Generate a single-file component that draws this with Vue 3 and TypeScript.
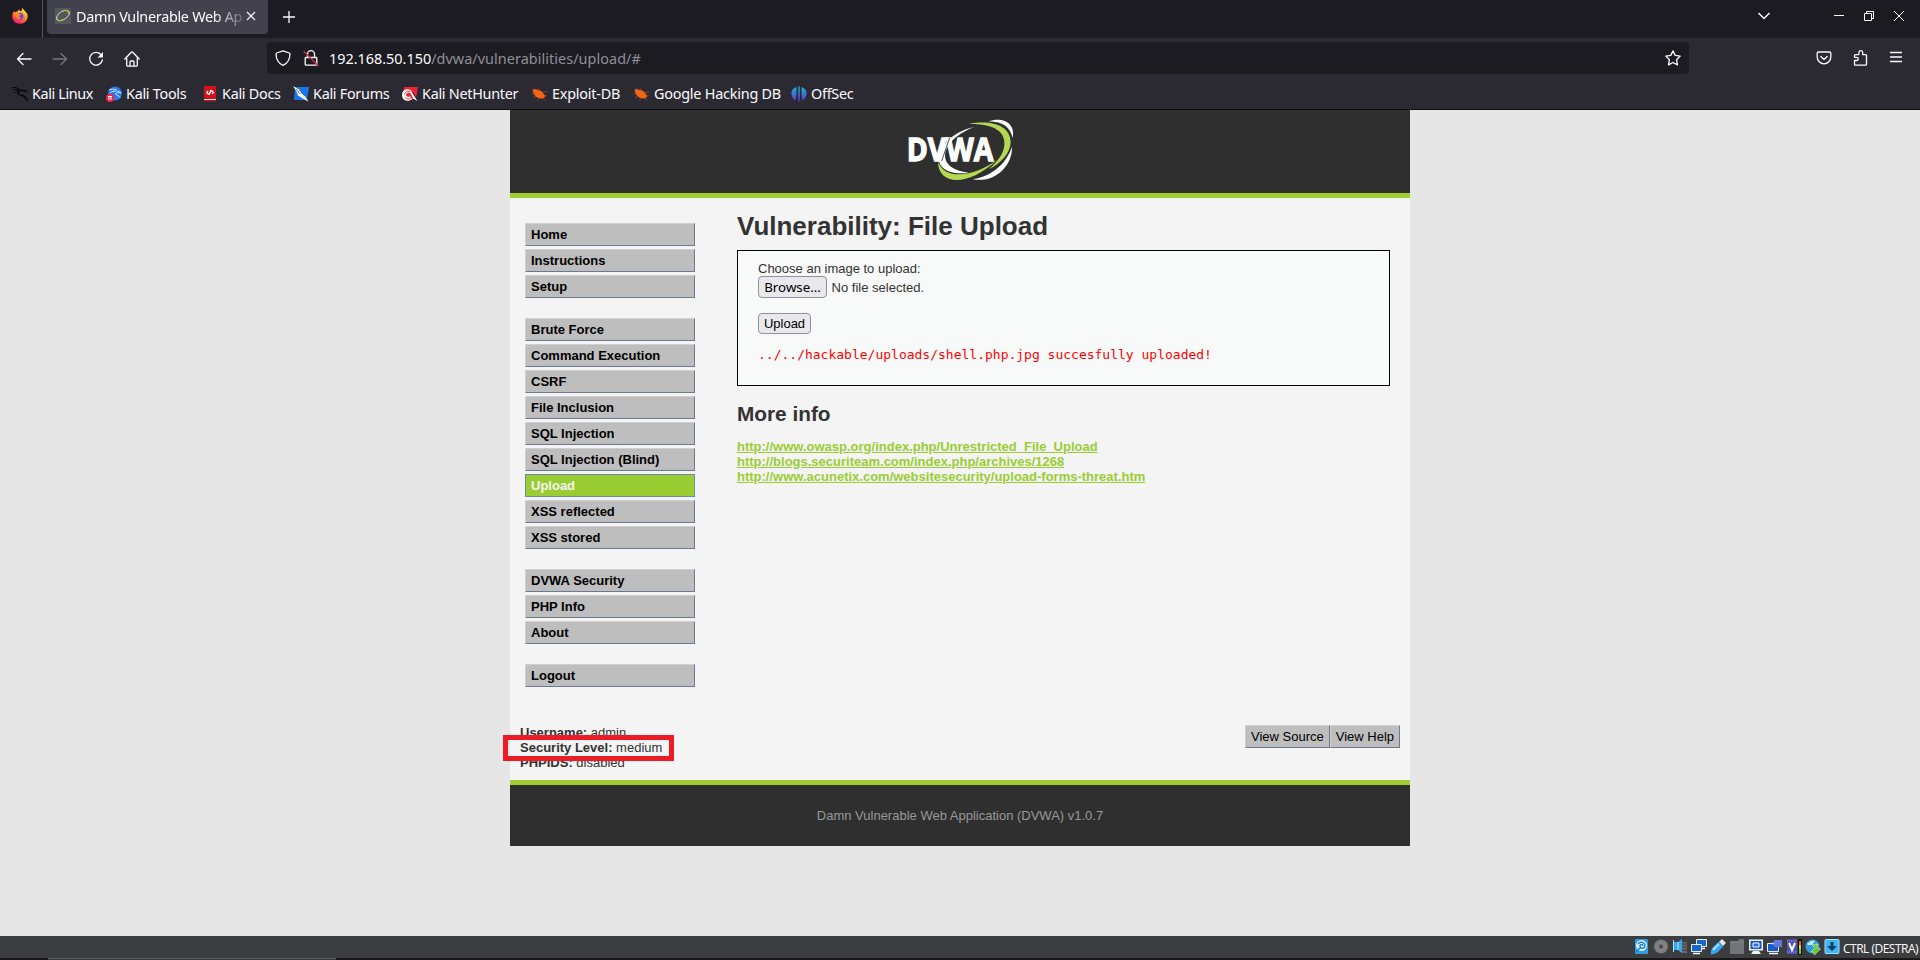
<script setup lang="ts">
interface MenuItem {
  label: string
  active?: boolean
}

const menu: MenuItem[][] = [
  [{ label: 'Home' }, { label: 'Instructions' }, { label: 'Setup' }],
  [
    { label: 'Brute Force' },
    { label: 'Command Execution' },
    { label: 'CSRF' },
    { label: 'File Inclusion' },
    { label: 'SQL Injection' },
    { label: 'SQL Injection (Blind)' },
    { label: 'Upload', active: true },
    { label: 'XSS reflected' },
    { label: 'XSS stored' },
  ],
  [{ label: 'DVWA Security' }, { label: 'PHP Info' }, { label: 'About' }],
  [{ label: 'Logout' }],
]

const links: string[] = [
  'http://www.owasp.org/index.php/Unrestricted_File_Upload',
  'http://blogs.securiteam.com/index.php/archives/1268',
  'http://www.acunetix.com/websitesecurity/upload-forms-threat.htm',
]

const info: { key: string; value: string }[] = [
  { key: 'Username:', value: 'admin' },
  { key: 'Security Level:', value: 'medium' },
  { key: 'PHPIDS:', value: 'disabled' },
]

const bookmarks: { label: string; icon: string }[] = [
  { label: 'Kali Linux', icon: 'kali' },
  { label: 'Kali Tools', icon: 'tools' },
  { label: 'Kali Docs', icon: 'docs' },
  { label: 'Kali Forums', icon: 'forums' },
  { label: 'Kali NetHunter', icon: 'hunter' },
  { label: 'Exploit-DB', icon: 'bug' },
  { label: 'Google Hacking DB', icon: 'bug' },
  { label: 'OffSec', icon: 'offsec' },
]
</script>

<template>
  <div class="screen">
    <header class="chrome">
      <div class="tabbar">
        <div class="pinned">
          <svg class="i16" viewBox="0 0 16 16">
            <defs>
              <linearGradient id="fox" x1="0.8" y1="0" x2="0.3" y2="1">
                <stop offset="0" stop-color="#fff04a" />
                <stop offset="0.45" stop-color="#ff9a1f" />
                <stop offset="0.8" stop-color="#ff3b4f" />
                <stop offset="1" stop-color="#e31587" />
              </linearGradient>
            </defs>
            <path d="M2 3.2 3 4.4C3.8 3.6 4.6 3.4 5.4 3.6 6 2.4 6.6 1.8 7.4 1.6 7.2 2.6 7.6 3 8.4 3.2L9.6 2.8C9.8 1.8 10 .9 10.8 0c.4 1.8 1.6 2.4 2.8 3.8C15 5 15.8 6.600 15.700 8.400 15.500 12.800 12.200 15.800 8 15.800 3.600 15.800.3 12.700.3 8.200.3 6.200 1 4.600 2 3.200Z" fill="url(#fox)" />
            <circle cx="8" cy="8.300" r="3.500" fill="#7542e5" />
            <path d="M3.500 5.200c1.500-.7 2.800-.3 3.800.7l2 .4c-.4 1-1.400 1-2.100 1.500-.3 1.500.9 2.300 2.300 1.700-.6 1.500-2.700 1.900-4.200.9C3.600 9.200 3 7 3.500 5.200Z" fill="#ff8b24" />
          </svg>
        </div>
        <div class="tab">
          <svg class="i16" viewBox="0 0 16 16">
            <rect width="16" height="16" fill="#55575d" />
            <path d="M8 3C13 1 16 4 13.500 7.500 11 11 6 13.500 3 12.500 0 11.500 2 5 8 3Z" fill="none" stroke="#dfe5d6" stroke-width="1" />
            <path d="M8 3c4-1.600 6.500.3 5.600 2.800M9 11.300C5 13.500 2 13 2 10.500" fill="none" stroke="#a3c63c" stroke-width="1.200" />
          </svg>
          <span class="tab-title">Damn Vulnerable Web Ap</span>
          <svg class="tab-x" viewBox="0 0 10 10"><path d="m1 1 8 8M9 1 1 9" /></svg>
        </div>
        <svg class="plus" viewBox="0 0 12 12"><path d="M6 0v12M0 6h12" /></svg>
        <div class="window-tools">
          <svg class="chev" viewBox="0 0 12 8"><path d="m.5 1 5.500 5.500L11.500 1" /></svg>
          <svg class="w10" viewBox="0 0 10 10"><path d="M0 4.500h10" /></svg>
          <svg class="w10" viewBox="0 0 10 10"><path d="M.5 2.500h7v7h-7zM2.500 2.500v-2h7v7h-2" /></svg>
          <svg class="w10" viewBox="0 0 10 10"><path d="m0 0 10 10M10 0 0 10" /></svg>
        </div>
      </div>

      <div class="navbar">
        <svg class="i16 stroke" viewBox="0 0 16 16"><path d="M15 8H1.500M7 2.500 1.500 8 7 13.500" /></svg>
        <svg class="i16 stroke dim" viewBox="0 0 16 16"><path d="M1 8h13.500M9 2.500 14.500 8 9 13.500" /></svg>
        <svg class="i16 stroke" viewBox="0 0 16 16">
          <path d="M13.300 4A6.400 6.400 0 1 0 14.400 8.800" />
          <path d="M15 1v5.500H9.500Z" fill="#fbfbfe" stroke="none" />
        </svg>
        <svg class="i16 stroke" viewBox="0 0 16 16">
          <path d="M.8 8 7.300 1.300q.7-.6 1.400 0L15.200 8M2.700 7v7q0 1.200 1.200 1.200h8.200q1.200 0 1.200-1.200V7M6 15v-4q0-1 1-1h2q1 0 1 1v4" />
        </svg>
        <div class="urlbar">
          <svg class="i16 stroke" viewBox="0 0 16 16">
            <path d="M8 .8 14.300 3q.7.300.7 1C14.800 9.500 12.500 13.500 8 15.300 3.500 13.500 1.200 9.500 1 4q0-.7.7-1Z" />
          </svg>
          <svg class="i16 stroke lock" viewBox="0 0 16 16">
            <path d="M3 7.500h10q.8 0 .8.800v5.900q0 1-1 1H3.200q-1 0-1-1V8.300q0-.8.800-.8ZM4.500 7.500V4.200a3.500 3.500 0 0 1 7 0v3.300" />
            <path class="slash" d="m1 1.500 14 14" />
          </svg>
          <span class="url"><b>192.168.50.150</b>/dvwa/vulnerabilities/upload/#</span>
          <svg class="i16 stroke star" viewBox="0 0 16 16">
            <path d="M8 .9 10.200 5.400 15.200 6.100 11.600 9.700 12.500 14.900 8 12.500 3.500 14.900 4.400 9.700.8 6.100 5.800 5.400Z" />
          </svg>
        </div>
        <div class="nav-right">
          <svg class="i16 stroke" viewBox="0 0 16 16">
            <path d="M2.300 2h11.400q1.100 0 1.100 1.100V7a6.800 6.800 0 0 1-13.600 0V3.100Q1.200 2 2.300 2Z" />
            <path d="m4.800 6.500 3.200 3 3.200-3" />
          </svg>
          <svg class="i16 stroke" viewBox="0 0 16 16">
            <path d="M2.500 10.500V14.500q0 .7.7.7H13.500q1 0 1-1V5.600q0-1-1-1H10.700V2.500a1.900 1.900 0 0 0-3.800 0V4.600H3.500q-1 0-1 1V7.300H4.600a1.600 1.600 0 0 1 0 3.200H2.500" />
          </svg>
          <svg class="i16 stroke" viewBox="0 0 16 16"><path d="M2.500 2.500h11M2.500 7h11M2.500 11.500h11" /></svg>
        </div>
      </div>

      <nav class="bookmarks">
        <a v-for="b in bookmarks" :key="b.label" class="bookmark" :class="'mark-' + b.icon">
          <svg v-if="b.icon === 'kali'" class="i16" viewBox="0 0 16 16" fill="none" stroke="#08080a">
            <path d="M0 1.500c4-.3 7.500.8 9 3M1 4c3.500-1.200 6-.5 8 1M2 7c2-1.500 4-2 6.500-1.500" stroke-width="1" />
            <path d="M7 4c-2 2.500-1 5 2.500 5.200C12.500 9.500 13.500 11 15.500 15M9 4.500c2.500-.5 4.500.5 6 1.500" stroke-width="1.500" />
          </svg>
          <svg v-else-if="b.icon === 'tools'" class="i16" viewBox="0 0 16 16">
            <circle cx="9" cy="7.500" r="7" fill="#2877f4" />
            <path d="M3 4c5-2 8 0 9 1.500 1.500 0 2.500.6 3 1.500-2-.7-5-.6-5.500.8 0 1.700 3.500 1.200 4.800 4M4 7c2-2 4-2 6-1.500" fill="none" stroke="#d4e6ff" />
            <circle cx="4" cy="12" r="4" fill="#f3243a" />
            <path d="M2 10.500h4M3 10.500v3.500M5 10.500v3.500" stroke="#fff" />
          </svg>
          <svg v-else-if="b.icon === 'docs'" class="i16" viewBox="0 0 16 16">
            <path d="M2 0h12v13H2z" fill="#d3101c" />
            <path d="M2 13h12v1.200H2z" fill="#f6e7e5" />
            <path d="M1.500 14.200h12V15.500h-12z" fill="#b90d17" />
            <path d="M6 5 4.700 6.500 6 7.900H8M8 5h2l1.400 1.400L10 7.800M9 3.800 7 9" fill="none" stroke="#fff" stroke-width="1.300" />
          </svg>
          <svg v-else-if="b.icon === 'forums'" class="i16" viewBox="0 0 16 16">
            <path d="M2 1h14l-2 13H1Z" fill="#1976e8" />
            <path d="m0 0 6 3.500 2.500 4 4 3.500 3 4.500-5-2.500L5 9.500 3.500 5.500Z" fill="#fff" />
            <path d="m3 3 4 5" stroke="#253a58" stroke-width=".7" />
          </svg>
          <svg v-else-if="b.icon === 'hunter'" class="i16" viewBox="0 0 16 16">
            <path d="M2 1h14l-2 11-6 2.500L1 13Z" fill="#eb2334" />
            <path d="M0 9C0 3 7 1.500 10 5.500c1 3 2.500 4.500 5.500 9.500l-4.500-2.500L9.500 9C8.500 6 5.500 5.500 4.200 8c-.7 2.700 2.300 3.500 3.800 2.200L10 13c-4 3.500-10 1.500-10-4Z" fill="#fff" />
            <path d="M2.500 8.500C3 5 7 4 9 6.500M3 11.500c1.500 2 4.500 2 6 .5" fill="none" stroke="#eb2334" stroke-width=".9" />
            <path d="m10 5.500 5.500 8.500" stroke="#20212a" stroke-width=".9" />
          </svg>
          <svg v-else-if="b.icon === 'bug'" class="i16" viewBox="0 0 16 16">
            <path d="M1.500 4C3 2.500 5 3 6.500 4 9.500 4 12 6 13 8.500l1.500 1.700-2.500 2.300C8 13 4 11 2.500 7.500Z" fill="#f06518" />
            <path d="M4 4 2.500 1.500M8 4.500 7 2M12 6.500l4-1M3 7.500.5 8M5 10.500l-3 1M8 12.500l-1.500 2M13.500 9l2.500 1M12 12.500l2 2" stroke="#9a4920" stroke-width=".8" />
          </svg>
          <svg v-else class="i16" viewBox="0 0 16 16">
            <defs>
              <linearGradient id="off" x2="0" y2="1">
                <stop offset="0" stop-color="#19b1c7" />
                <stop offset="0.5" stop-color="#3978d5" />
                <stop offset="1" stop-color="#6328cf" />
              </linearGradient>
            </defs>
            <path d="M5.500 1C-1 3-1 10 4 14.500 5.500 12 5.500 9 5.500 1ZM10.500 1c6.500 2 6.500 9 1.500 13.500-1.500-2.500-1.500-5.500-1.500-13.500ZM7.200.5h1.600v15H7.200Z" fill="url(#off)" />
          </svg>
          <span>{{ b.label }}</span>
        </a>
      </nav>
    </header>

    <main class="viewport">
      <div class="site">
        <div class="site-header">
          <svg class="logo" viewBox="81 42 324 186">
            <path d="M325 49C370 34 408 56 398 99 390 68 372 50 325 49Z" fill="#fff" />
            <path d="M266 57C335 43 392 62 392 112 391 145 362 176 326 193 360 163 375 139 373 110 370 70 325 56 266 57Z" fill="#b5d854" />
            <path d="M174 170C174 238 260 250 352 164 293 209 197 232 174 170Z" fill="#b5d854" />
            <path d="M286 65C200 82 157 150 186 186 203 204 235 208 266 203 220 198 194 178 195 150 198 115 236 82 286 65Z" fill="#fff" />
            <path d="M396 125C398 185 340 237 277 222 330 217 378 179 396 125Z" fill="#fff" />
            <text x="80" y="169" textLength="260" lengthAdjust="spacingAndGlyphs" class="logo-text">DVWA</text>
            <path d="M209 98 185 168" stroke="#2f2f2f" stroke-width="2.500" />
          </svg>
        </div>

        <div class="site-body">
          <aside class="menu">
            <ul v-for="(group, gi) in menu" :key="gi">
              <li v-for="m in group" :key="m.label" :class="{ active: m.active }">{{ m.label }}</li>
            </ul>
          </aside>
          <section class="content">
            <h1>Vulnerability: File Upload</h1>
            <div class="upload-box">
              <div class="line">Choose an image to upload:</div>
              <div class="file-row"><span class="btn browse">Browse…</span><span>No file selected.</span></div>
              <span class="btn submit">Upload</span>
              <pre>../../hackable/uploads/shell.php.jpg succesfully uploaded!</pre>
            </div>
            <h2>More info</h2>
            <ul class="links">
              <li v-for="l in links" :key="l"><a>{{ l }}</a></li>
            </ul>
          </section>
        </div>

        <div class="system-info">
          <div class="info">
            <div v-for="i in info" :key="i.key"><b>{{ i.key }}</b> {{ i.value }}</div>
            <div class="highlight"></div>
          </div>
          <div class="view-buttons"><span>View Source</span><span>View Help</span></div>
        </div>

        <footer class="site-footer">Damn Vulnerable Web Application (DVWA) v1.0.7</footer>
      </div>
    </main>

    <div class="vm-bar">
      <svg class="i16" viewBox="0 0 16 16">
        <rect x="1" width="13" height="15" rx="1" fill="#2e9be2" />
        <circle cx="7.500" cy="6.500" r="5.500" fill="#d9f0fc" />
        <path d="M4 5c2-3 7-2 7 1.500S6.500 10 6 7.500 9 5 9 7M2 13l4-4" fill="none" stroke="#1f7fc7" stroke-width="1.400" />
      </svg>
      <svg class="i16" viewBox="0 0 16 16">
        <circle cx="8" cy="7.500" r="7" fill="#7b7c7d" /><circle cx="8" cy="7.500" r="2" fill="#47494b" /><circle cx="8" cy="7.500" r="4" fill="none" stroke="#888" />
      </svg>
      <svg class="i16" viewBox="0 0 16 16">
        <path d="M9 3h6v11H9z" fill="#66686a" /><path d="M10 5h6M10 8h6M10 11h6" stroke="#3e4042" />
        <path d="M2 3h4l4-3v14l-4-3H2z" fill="#3ea4f0" /><path d="M6 3v8M1.500 1v12" stroke="#a9e1ff" />
      </svg>
      <svg class="i16" viewBox="0 0 16 16">
        <path d="M5.500.5h10v7h-10z" fill="#1766ce" stroke="#e7edf4" /><path d="M8 9.500h6" stroke="#fff" stroke-width="1.500" />
        <path d="M.5 5.500h10v7H.5z" fill="#1766ce" stroke="#e7edf4" /><path d="M2 14.500h7" stroke="#fff" stroke-width="1.500" />
      </svg>
      <svg class="i16" viewBox="0 0 16 16">
        <path d="m9 3 3-3 4 4-3 3Z" fill="#e8e8e8" /><path d="M9 2.500 13.500 7 8 13q-3 2-7 2.500Q0 12 3 8Z" fill="#39a5ee" /><path d="m3 11 6-6" stroke="#a8e2ff" stroke-width="2" />
      </svg>
      <svg class="i16" viewBox="0 0 16 16"><path d="M1 2h8l1-2h5v15H1z" fill="#737475" /><path d="M1 3h14" stroke="#858687" /></svg>
      <svg class="i16" viewBox="0 0 16 16">
        <path d="M1 .500h14v11H1zM5 12h6l2 3H3z" fill="#eff2f7" /><path d="M2.500 2h11v8h-11z" fill="#1857bd" /><path d="M5 4h6v4H5z" fill="#2173df" stroke="#fff" />
      </svg>
      <svg class="i16" viewBox="0 0 16 16">
        <path d="M.5 4.500h11v8H.5z" fill="#1a5cc5" stroke="#dfe8f5" /><path d="M2 14.500h9" stroke="#fff" stroke-width="1.500" />
        <path d="M7 1h8v7H7z" fill="#6276db" /><path d="m5 3 3 1.500L5 6z" fill="#a6baff" />
      </svg>
      <svg class="i16" viewBox="0 0 16 16">
        <path d="M1 0h10v15H1z" fill="#4f50b6" /><path d="M1 2h10M1 13h10" stroke="#9ba0e0" stroke-dasharray="1 1" />
        <path d="m3 4 3 7 3-7" fill="none" stroke="#fff" stroke-width="2" />
        <path d="M12 0h4v16h-4z" fill="#111" /><path d="M13 2h2v4h-2z" fill="#f15d22" /><path d="M13 6h2v4h-2z" fill="#e8cf35" /><path d="M13 10h2v5h-2z" fill="#5bd532" />
      </svg>
      <svg class="i16" viewBox="0 0 16 16">
        <circle cx="7.500" cy="7.500" r="7" fill="#2f9be0" /><path d="M2 5q4-5 8-3L7 6H3z" fill="#bde9ff" />
        <path d="m7 6 6-1-1.500 3 4 2-6 6-1-3H6l4-4Z" fill="#69c92c" stroke="#d6f2b8" stroke-width=".6" />
      </svg>
      <svg class="i16" viewBox="0 0 16 16">
        <rect x="1" y=".5" width="14" height="14" rx="1" fill="#42b5f2" stroke="#9be0ff" /><path d="M6.500 3h3v4H13l-5 5-5-5h3.500z" fill="#123f66" />
      </svg>
      <span class="host-key">CTRL (DESTRA)</span>
    </div>
    <div class="desk-edge"><div class="desk-task"></div></div>
  </div>
</template>

<style>
html,
body {
  margin: 0;
  overflow: hidden;
}
</style>

<style scoped>
.screen {
  width: 1920px;
  height: 960px;
  display: flex;
  flex-direction: column;
  overflow: hidden;
  background: #e6e6e6;
  font-family: "Liberation Sans", Arial, sans-serif;
  font-size: 13px;
  line-height: 15px;
}
svg {
  display: block;
  flex: none;
  overflow: visible;
}
ul,
h1,
h2,
pre {
  margin: 0;
  padding: 0;
  list-style: none;
}
.i16 {
  width: 16px;
  height: 16px;
}
.chrome {
  box-sizing: border-box;
  height: 110px;
  flex: none;
  background: #2b2a33;
  border-bottom: 1px solid #0c0c0d;
  color: #fbfbfe;
  font-family: "Noto Sans", sans-serif;
  font-size: 14.4px;
}
.tabbar {
  height: 38px;
  display: flex;
  background: #1c1b22;
}
.pinned {
  box-sizing: border-box;
  width: 43px;
  padding: 8px 0 0 12px;
  border-right: 1px solid #54535a;
}
.tab {
  box-sizing: border-box;
  width: 221px;
  height: 34px;
  margin-left: 4px;
  padding: 0 11px 6px 8px;
  display: flex;
  align-items: center;
  background: #42414d;
  border-radius: 0 0 4px 4px;
}
.tab > .i16 {
  margin-top: 4px;
}
.tab-title {
  flex: none;
  width: 168px;
  margin: 5px 2px 0 5px;
  white-space: nowrap;
  line-height: 22px;
  letter-spacing: -0.3px;
  -webkit-mask-image: linear-gradient(90deg, #000 138px, transparent 174px);
  mask-image: linear-gradient(90deg, #000 138px, transparent 174px);
}
.tab-x {
  width: 10px;
  height: 10px;
  margin-top: 4px;
  fill: none;
  stroke: #fbfbfe;
  stroke-width: 1.1;
}
.plus {
  width: 12px;
  height: 12px;
  margin: 11px 0 0 15px;
  stroke: #fbfbfe;
  stroke-width: 1.3;
}
.window-tools {
  height: 31px;
  margin-left: auto;
  padding-right: 16px;
  display: flex;
  align-items: center;
  gap: 20px;
}
.window-tools svg {
  fill: none;
  stroke: #fbfbfe;
}
.chev {
  width: 12px;
  height: 8px;
  margin-right: 44px;
  stroke-width: 1.4;
}
.w10 {
  width: 10px;
  height: 10px;
}
.navbar {
  height: 32px;
  padding: 4px 16px 0;
  display: flex;
  align-items: center;
  gap: 20px;
}
.navbar > .i16 {
  margin-top: 2px;
}
.stroke {
  fill: none;
  stroke: #fbfbfe;
  stroke-width: 1.3;
  stroke-linecap: round;
  stroke-linejoin: round;
}
.dim {
  stroke: #76757b;
}
.urlbar {
  box-sizing: border-box;
  width: 1422px;
  height: 32px;
  margin-left: 107px;
  padding: 0 8px;
  display: flex;
  align-items: center;
  background: #1c1b22;
  border-radius: 4px;
}
.lock {
  margin-left: 12px;
}
.slash {
  stroke: #e22850;
}
.url {
  margin: 2px 0 0 10px;
  line-height: 22px;
  letter-spacing: 0.06px;
  color: #918f97;
}
.url b {
  color: #fbfbfe;
  font-weight: 400;
  letter-spacing: 0;
}
.star {
  margin-left: auto;
}
.nav-right {
  margin-left: auto;
  display: flex;
  gap: 20px;
}
.bookmarks {
  height: 39px;
  padding-left: 12px;
  display: grid;
  grid-template-columns: 94px 96px 91px 109px 129px 102px 158px 90px;
  align-items: center;
}
.bookmark {
  height: 22px;
  display: flex;
  align-items: center;
  gap: 4px;
  line-height: 22px;
  letter-spacing: -0.28px;
  white-space: nowrap;
}
.mark-kali {
  letter-spacing: -0.38px;
}
.mark-bug {
  gap: 5px;
  letter-spacing: -0.22px;
}
.viewport {
  flex: 1;
  display: flex;
  justify-content: center;
  align-items: flex-start;
}
.site {
  width: 900px;
  background: #f4f4f4;
  color: #333;
}
.site-header {
  box-sizing: border-box;
  height: 88px;
  padding: 9px 0 0 397px;
  background: #2f2f2f;
  border-bottom: 5px solid #a1cc33;
}
.logo {
  width: 108px;
  height: 62px;
}
.logo-text {
  fill: #fff;
  stroke: #fff;
  stroke-width: 4px;
  font: 700 98px "Open Sans", sans-serif;
}
.site-body {
  height: 527px;
  display: flex;
}
.menu {
  width: 170px;
  padding: 25px 42px 0 15px;
  display: flex;
  flex-direction: column;
  gap: 20px;
}
.menu ul {
  display: flex;
  flex-direction: column;
  gap: 3px;
}
.menu li,
.view-buttons span {
  padding: 3px 5px;
  background: #bebebe;
  border: 1px solid;
  border-color: #d0d0d0 #6d7891 #6d7891 #d0d0d0;
  color: #000;
}
.menu li {
  font-weight: 700;
}
.menu li.active {
  background: #9acd32;
  border-color: #6d8aa8;
  color: #f4f4f4;
}
.content {
  width: 653px;
  padding-top: 13px;
}
h1 {
  font-size: 26px;
  line-height: 30px;
}
h2 {
  margin-top: 16px;
  font-size: 20.8px;
  line-height: 24px;
}
.upload-box {
  box-sizing: border-box;
  height: 136px;
  margin-top: 9px;
  padding: 10px 20px;
  background: #f8faf9;
  border: 1px solid #000;
}
.file-row {
  display: flex;
  align-items: center;
  gap: 4.6px;
}
.btn {
  box-sizing: border-box;
  display: flex;
  align-items: center;
  justify-content: center;
  background: #e9e9ed;
  border: 1px solid #8f8f9d;
  border-radius: 4px;
  color: #000;
}
.browse {
  width: 69px;
  height: 22px;
  font-family: "Noto Sans", sans-serif;
  font-size: 13.33px;
}
.submit {
  width: 53px;
  height: 21px;
  margin-top: 15px;
}
pre {
  margin-top: 13px;
  color: #f00;
  font: 13px/15px "DejaVu Sans Mono", monospace;
}
.links {
  margin-top: 13px;
}
.links a {
  color: #9acd32;
  font-weight: 700;
  text-decoration: underline;
}
.system-info {
  height: 55px;
  padding: 0 10px;
  display: flex;
  justify-content: space-between;
  align-items: flex-start;
}
.info {
  position: relative;
}
.highlight {
  position: absolute;
  box-sizing: border-box;
  left: -17px;
  top: 10px;
  width: 171px;
  height: 26px;
  border: 5px solid #ed1c24;
}
.view-buttons {
  display: flex;
}
.site-footer {
  box-sizing: border-box;
  height: 66px;
  padding-top: 23px;
  background: #2f2f2f;
  border-top: 5px solid #a1cc33;
  color: #999;
  text-align: center;
}
.vm-bar {
  box-sizing: border-box;
  height: 22px;
  flex: none;
  padding: 3px 1px 0 0;
  display: flex;
  justify-content: flex-end;
  gap: 3px;
  background: #3c3d3f;
  color: #fff;
}
.host-key {
  width: 76px;
  font: 12px/19px "Open Sans", sans-serif;
  letter-spacing: -0.5px;
  white-space: nowrap;
}
.desk-edge {
  height: 2px;
  flex: none;
  padding-left: 48px;
  background: #1b1718;
}
.desk-task {
  box-sizing: border-box;
  width: 288px;
  height: 2px;
  border: 1px solid #5d5b5c;
  border-bottom-color: #373536;
}
</style>
